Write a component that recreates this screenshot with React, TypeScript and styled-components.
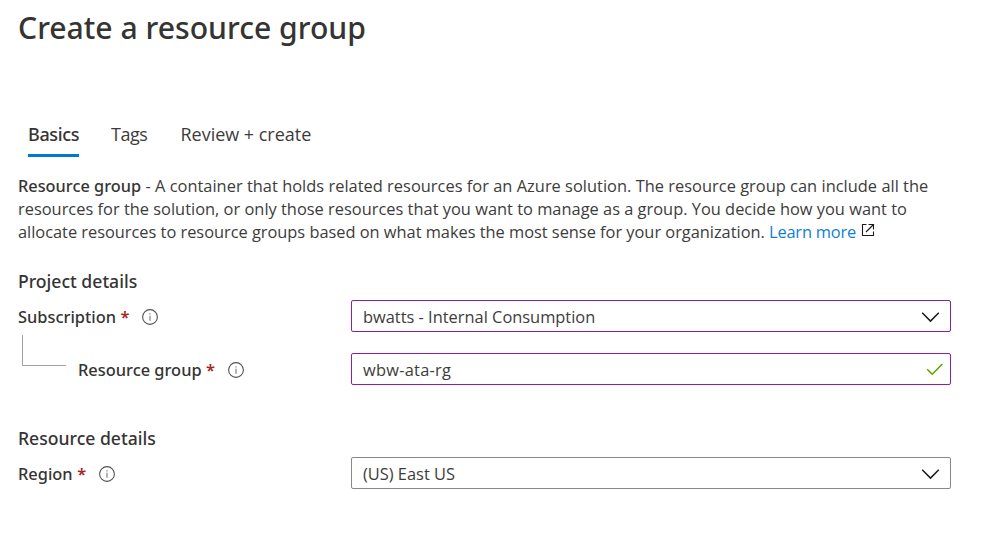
import React from 'react';
import styled, { createGlobalStyle } from 'styled-components';

const GlobalStyle = createGlobalStyle`
  *, *::before, *::after { box-sizing: border-box; }
  body {
    margin: 0;
    background: #fff;
    color: #3d3c3b;
    font-family: "Open Sans", "Noto Sans", sans-serif;
    font-size: 16.4px;
  }
`;

const strong = `font-family: "Noto Sans", "Open Sans", sans-serif; font-weight: 500; color: #353433;`;

const Page = styled.main`
  display: flex;
  flex-direction: column;
  width: 992px;
  height: 544px;
  padding: 8px 41px 0 18px;
  overflow: hidden;
`;

const Title = styled.h1`
  ${strong}
  margin: 0 0 72px;
  font-size: 30.15px;
  line-height: 40px;
  white-space: nowrap;
`;

const Tabs = styled.nav`
  display: flex;
  gap: 32px;
  height: 37px;
  margin: 0 0 17px 10px;
`;

const Tab = styled.a<{ $active?: boolean; $width: number; $spacing?: number }>`
  ${({ $active }) => ($active ? strong : '')}
  width: ${({ $width }) => $width}px;
  height: 37px;
  border-bottom: 3px solid ${({ $active }) => ($active ? '#0078d4' : 'transparent')};
  font-size: 18px;
  line-height: 29px;
  letter-spacing: ${({ $spacing = 0 }) => $spacing}px;
  white-space: nowrap;
`;

const Intro = styled.p`
  display: flex;
  flex-direction: column;
  margin: 0 0 26px;
  line-height: 23px;
`;

const IntroLine = styled.span<{ $spacing?: number }>`
  height: 23px;
  letter-spacing: ${({ $spacing = 0 }) => $spacing}px;
  white-space: nowrap;
`;

const Term = styled.b`
  ${strong}
  font-size: 16.3px;
`;

const Link = styled.a`
  color: #0f80d7;
  letter-spacing: -0.18px;
`;

const ExternalIcon = styled.svg`
  margin-left: 5px;
  vertical-align: 1px;
`;

const Section = styled.section`
  display: flex;
  flex-direction: column;
`;

const Heading = styled.h2`
  ${strong}
  margin: 0;
  height: 31px;
  font-size: 17.6px;
  line-height: 24px;
  white-space: nowrap;
`;

const Field = styled.div<{ $gap?: number }>`
  display: grid;
  grid-template-columns: 333px 600px;
  height: 32px;
  margin-bottom: ${({ $gap = 0 }) => $gap}px;
`;

const LabelCell = styled.div<{ $nested?: boolean }>`
  display: flex;
  align-items: center;
  height: 32px;
  padding-top: 2px;
  padding-left: ${({ $nested }) => ($nested ? 4 : 0)}px;
`;

const Branch = styled.span`
  align-self: flex-start;
  width: 44px;
  height: 31px;
  margin: -20px 12px 0 0;
  border: solid #a3a3a3;
  border-width: 0 0 1px 1px;
`;

const Label = styled.label`
  ${strong}
  line-height: 30px;
  white-space: nowrap;
`;

const Required = styled.span`
  margin: 0 13px 0 4.5px;
  color: #a4262c;
  font-family: "Noto Sans", sans-serif;
  font-size: 16.4px;
  font-weight: 600;
  line-height: 30px;
`;

const Control = styled.div<{ $edited?: boolean; $spacing?: number }>`
  display: flex;
  align-items: center;
  justify-content: space-between;
  height: 32px;
  padding: 2px 7px 0 11px;
  border: 1px solid ${({ $edited }) => ($edited ? '#8a21a5' : '#8a8886')};
  border-radius: 2px;
  letter-spacing: ${({ $spacing = 0 }) => $spacing}px;
  line-height: 28px;
  white-space: nowrap;
`;

const CheckIcon = styled.svg`
  margin: 0 -1px 2px 0;
`;

const InfoIcon = () => (
  <svg width="16" height="16" viewBox="0 0 16 16" fill="none">
    <circle cx="8" cy="8" r="7.4" stroke="#55534f" strokeWidth="1.1" />
    <path d="M8 4.2v1.4M8 6.8v5" stroke="#77757a" strokeWidth="1.1" />
  </svg>
);

const Chevron = () => (
  <svg width="24" height="16" viewBox="0 0 24 16" fill="none">
    <path d="M3.2 3.8 11.5 12.1 19.8 3.8" stroke="#1b1a19" strokeWidth="1.5" />
  </svg>
);

const Check = () => (
  <CheckIcon width="18" height="16" viewBox="0 0 18 16" fill="none">
    <path d="M1.2 8.2 6.2 13.2 16.4 3" stroke="#57a300" strokeWidth="1.5" />
  </CheckIcon>
);

const FieldLabel = ({ text, nested }: { text: string; nested?: boolean }) => (
  <LabelCell $nested={nested}>
    {nested && <Branch />}
    <Label>{text}</Label>
    <Required>*</Required>
    <InfoIcon />
  </LabelCell>
);

export default function App() {
  return (
    <Page>
      <GlobalStyle />
      <Title>Create a resource group</Title>
      <Tabs>
        <Tab $active $width={51} $spacing={-0.35}>Basics</Tab>
        <Tab $width={37.5} $spacing={-0.5}>Tags</Tab>
        <Tab $width={132} $spacing={-0.02}>Review + create</Tab>
      </Tabs>
      <Intro>
        <IntroLine $spacing={0.024}>
          <Term>Resource group</Term> - A container that holds related resources for an Azure solution. The resource group can include all the
        </IntroLine>
        <IntroLine $spacing={0.008}>
          resources for the solution, or only those resources that you want to manage as a group. You decide how you want to
        </IntroLine>
        <IntroLine $spacing={-0.02}>
          allocate resources to resource groups based on what makes the most sense for your organization.{' '}
          <Link>Learn more</Link>
          <ExternalIcon width="14" height="14" viewBox="0 0 14 14" fill="none">
            <path d="M5.5 1.5h-4v11h11v-4M7.5 1.5h5v5M12.5 1.5 5 9" stroke="#1b1a19" strokeWidth="1.1" />
          </ExternalIcon>
        </IntroLine>
      </Intro>
      <Section>
        <Heading>Project details</Heading>
        <Field $gap={21}>
          <FieldLabel text="Subscription" />
          <Control $edited>bwatts - Internal Consumption<Chevron /></Control>
        </Field>
        <Field $gap={41}>
          <FieldLabel text="Resource group" nested />
          <Control $edited $spacing={0.25}>wbw-ata-rg<Check /></Control>
        </Field>
      </Section>
      <Section>
        <Heading>Resource details</Heading>
        <Field>
          <FieldLabel text="Region" />
          <Control>(US) East US<Chevron /></Control>
        </Field>
      </Section>
    </Page>
  );
}
